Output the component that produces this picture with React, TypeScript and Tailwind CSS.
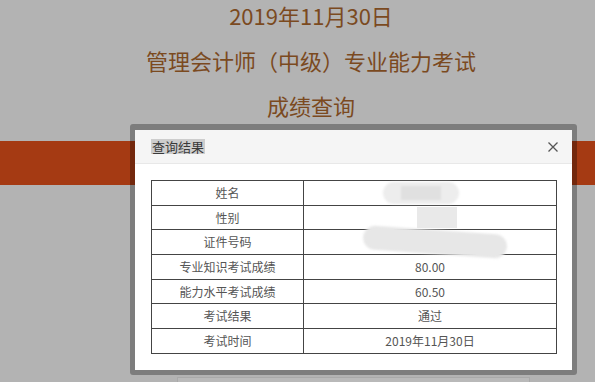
import React from "react";

const cjk = { fontFamily: '"Noto Sans CJK SC", "Noto Sans", sans-serif' };

function Blur({ className }: { className: string }) {
  return <div className={className} />;
}

const rows: [string, React.ReactNode][] = [
  [
    "姓名",
    <div className="flex justify-center">
      <div className="mr-[18px] flex h-[22px] w-[76px] items-center justify-center rounded-full bg-[#ededed] blur-[1px]">
        <Blur className="h-[14px] w-[40px] bg-[#e0e0e0]" />
      </div>
    </div>,
  ],
  [
    "性别",
    <div className="flex justify-center">
      <Blur className="ml-[14px] h-[21px] w-[40px] bg-[#e9e9e9] blur-[0.5px]" />
    </div>,
  ],
  [
    "证件号码",
    <div className="flex justify-center">
      <Blur className="-my-[3px] ml-[10px] h-[24px] w-[144px] rotate-[4deg] rounded-full bg-[#e7e7e7] blur-[1px]" />
    </div>,
  ],
  ["专业知识考试成绩", "80.00"],
  ["能力水平考试成绩", "60.50"],
  ["考试结果", "通过"],
  ["考试时间", "2019年11月30日"],
];

export default function App() {
  return (
    <div className="relative w-[595px] h-[382px] overflow-hidden bg-[#b3b3b3]" style={cjk}>
      {/* page behind the overlay */}
      <div className="w-[622px] -mt-[7px] text-center text-[22px] leading-[45px] text-[#7b4a1f]">
        <div>2019年11月30日</div>
        <div>管理会计师（中级）专业能力考试</div>
        <div>成绩查询</div>
      </div>
      <div className="mt-[13px] h-[44px] bg-[#a53a13]" />
      <div className="mt-[192px] ml-[177px] w-[353px] h-[20px] bg-[#b9b9b9] border border-[#a9a9a9]" />

      {/* dialog */}
      <div className="absolute left-[130px] top-[124px] w-[447px] h-[251px] rounded-[3px] border-[5px] border-t-[6px] border-[rgba(0,0,0,0.3)] bg-white bg-clip-padding">
        <div className="flex h-[34px] items-center justify-between border-b border-[#e8e8e8] bg-[#f5f5f5] pl-[16px] pr-[13px]">
          <span className="bg-[#cdcdcd] px-[1px] text-[13px] leading-[15px] text-[#3a3a3a]">查询结果</span>
          <svg width="12" height="12" viewBox="0 0 12 12" className="text-[#555]">
            <path d="M1.5 1.5 L10.5 10.5 M10.5 1.5 L1.5 10.5" stroke="currentColor" strokeWidth="1.3" fill="none" />
          </svg>
        </div>
        <div className="pt-[16px] pl-[16px] pr-[15px]">
          <table className="w-[406px] border-collapse text-[12px] text-[#555]">
            <tbody>
              {rows.map(([k, v]) => (
                <tr key={k} className="h-[24.7px]">
                  <td className="w-[152px] border border-[#444] p-0 text-center leading-[14px]">{k}</td>
                  <td className="border border-[#444] p-0 text-center leading-[14px]">{v}</td>
                </tr>
              ))}
            </tbody>
          </table>
        </div>
      </div>
    </div>
  );
}
